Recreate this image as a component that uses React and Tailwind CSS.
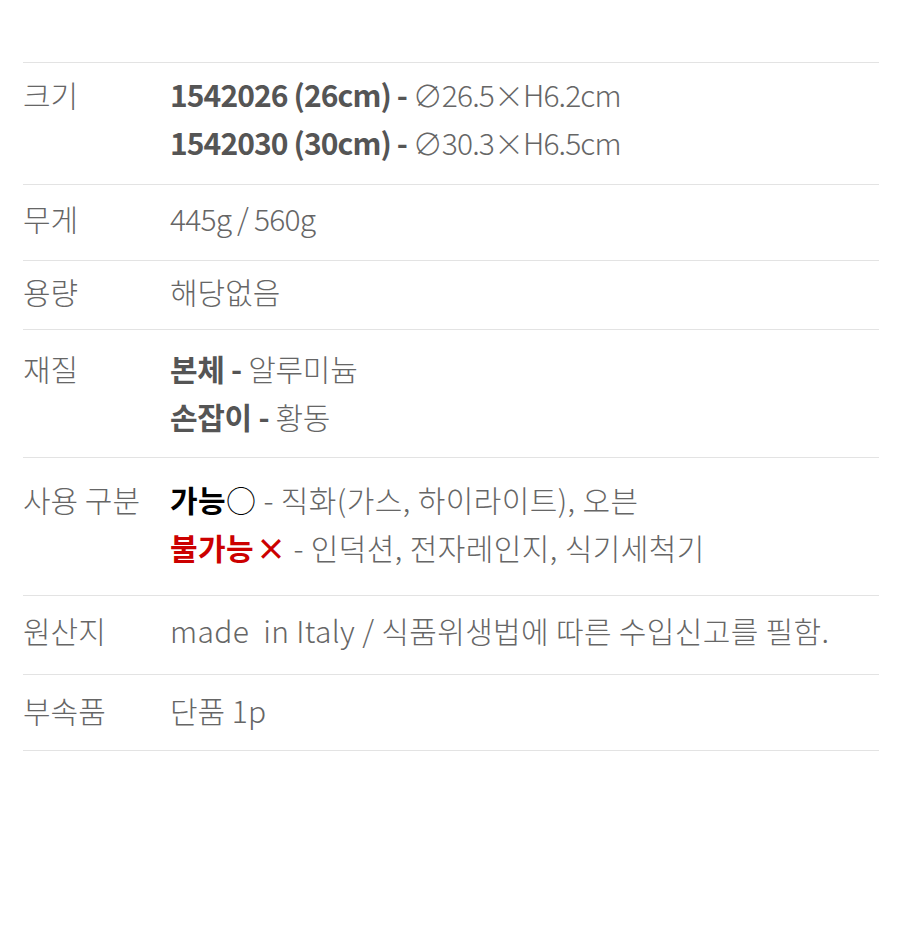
import React from "react";

const font = { fontFamily: '"Noto Sans CJK KR", "Noto Sans", sans-serif' };

function Row({ label, children, pad }) {
  return (
    <div className={`flex border-b border-[#e3e3e3] ${pad}`}>
      <div className="w-[147px] shrink-0">{label}</div>
      <div className="flex-1">{children}</div>
    </div>
  );
}

export default function App() {
  return (
    <div className="bg-white min-h-[951px] w-[914px]" style={font}>
      <div className="pt-[62px] pl-[23px] w-[879px]">
        <div className="border-t border-[#e3e3e3] text-[30px] leading-[48px] text-[#666] font-light">
          <Row label="크기" pad="pt-[7px] pb-[18px]">
            <div className="tracking-[-0.9px]">
              <span className="font-bold text-[#555]">1542026 (26cm) -</span> ∅26.5×H6.2cm
            </div>
            <div className="tracking-[-0.9px]">
              <span className="font-bold text-[#555]">1542030 (30cm) -</span> ∅30.3×H6.5cm
            </div>
          </Row>
          <Row label="무게" pad="pt-[9px] pb-[18px]">
            <div className="tracking-[-0.8px]">445g / 560g</div>
          </Row>
          <Row label="용량" pad="pt-[6px] pb-[14px]">
            <div>해당없음</div>
          </Row>
          <Row label="재질" pad="pt-[14px] pb-[17px]">
            <div className="tracking-[-0.3px]">
              <span className="font-bold text-[#555]">본체 -</span> 알루미늄
            </div>
            <div className="tracking-[-0.3px]">
              <span className="font-bold text-[#555]">손잡이 -</span> 황동
            </div>
          </Row>
          <Row label="사용 구분" pad="pt-[17px] pb-[24px]">
            <div className="tracking-[0.4px]">
              <span className="font-bold text-black">가능</span>
              <span className="text-black">○</span> - 직화(가스, 하이라이트), 오븐
            </div>
            <div className="tracking-[0.4px]">
              <span className="font-bold text-[#cc0000]">불가능</span>
              <span className="font-bold text-[#cc0000] ml-[2px]">×</span> - 인덕션, 전자레인지, 식기세척기
            </div>
          </Row>
          <Row label="원산지" pad="pt-[10px] pb-[20px]">
            <div className="tracking-[0.35px]">made&nbsp; in Italy / 식품위생법에 따른 수입신고를 필함.</div>
          </Row>
          <Row label="부속품" pad="pt-[11px] pb-[16px]">
            <div>단품 1p</div>
          </Row>
        </div>
      </div>
    </div>
  );
}
